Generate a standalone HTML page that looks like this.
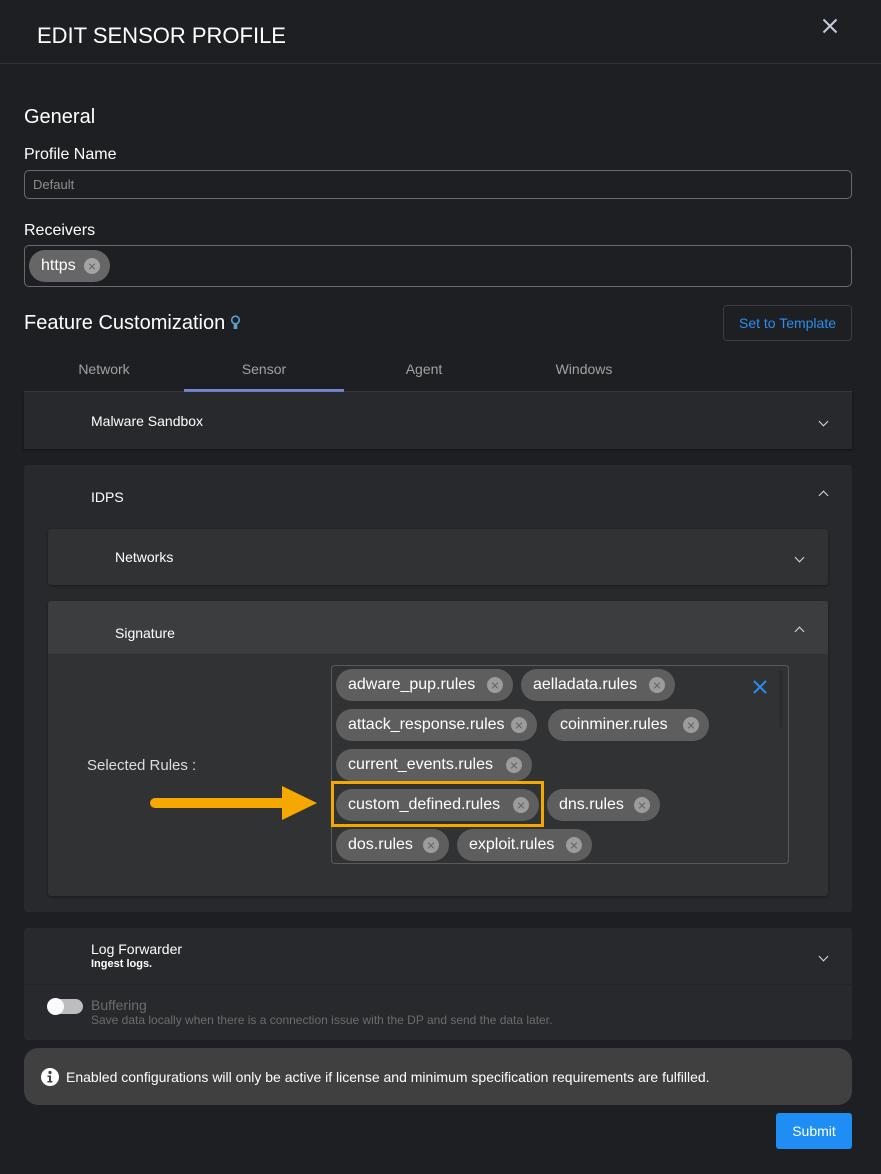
<!DOCTYPE html>
<html><head><meta charset="utf-8"><style>
*{box-sizing:border-box;margin:0;padding:0}
body{width:881px;height:1174px;background:#1e1f22;font-family:"Liberation Sans",sans-serif;color:#fff;position:relative;overflow:hidden}
.a{position:absolute}
.chip{position:absolute;height:32px;border-radius:16px;background:#5e5e5e;color:#fff;font-size:16px;line-height:32px;padding-left:12px;white-space:nowrap}
.chip i{position:absolute;right:10px;top:8px;width:16px;height:16px;border-radius:50%;background:#9c9c9c}
.chip i:before,.chip i:after{content:"";position:absolute;left:4px;top:7.5px;width:8px;height:1px;background:#5e5e5e;transform:rotate(45deg)}
.chip i:after{transform:rotate(-45deg)}
.chev{position:absolute;width:7px;height:7px;border-right:1.5px solid #ddd;border-bottom:1.5px solid #ddd;transform:rotate(45deg)}
.up{transform:rotate(-135deg)}
</style></head><body>
<div class="a" style="left:37px;top:23px;font-size:22px">EDIT SENSOR PROFILE</div>
<svg class="a" style="left:822px;top:18px" width="16" height="16"><path d="M1.5 1.5L14.5 14.5M14.5 1.5L1.5 14.5" stroke="#c4cedb" stroke-width="2"/></svg>
<div class="a" style="left:0;top:63px;width:881px;height:1px;background:#323336"></div>

<div class="a" style="left:24px;top:106px;font-size:20px">General</div>
<div class="a" style="left:24px;top:146px;font-size:16px">Profile Name</div>
<div class="a" style="left:24px;top:170px;width:828px;height:29px;border:1px solid #6a6a6a;border-radius:5px;font-size:13px;color:#8e8e8e;padding:6px 0 0 8px">Default</div>
<div class="a" style="left:24px;top:222px;font-size:16px">Receivers</div>
<div class="a" style="left:24px;top:245px;width:828px;height:42px;border:1px solid #6a6a6a;border-radius:5px"></div>
<div class="chip" style="left:29px;top:250px;width:81px;background:#666">https<i style="background:#a4a4a4"></i></div>

<div class="a" style="left:24px;top:312px;font-size:20px">Feature Customization</div>
<svg class="a" style="left:230px;top:315px" width="11" height="16"><circle cx="5.5" cy="5" r="3.8" fill="none" stroke="#5aa0d0" stroke-width="1.6"/><rect x="3.7" y="9" width="3.6" height="5" fill="#5aa0d0"/></svg>
<div class="a" style="left:723px;top:305px;width:129px;height:36px;border:1px solid #3c3d40;border-radius:4px;color:#2b8ef0;font-size:14px;text-align:center;line-height:34px">Set to Template</div>

<div class="a" style="left:24px;top:361px;width:160px;text-align:center;font-size:14px;color:#a2a2a2">Network</div>
<div class="a" style="left:184px;top:361px;width:160px;text-align:center;font-size:14px;color:#a2a2a2">Sensor</div>
<div class="a" style="left:344px;top:361px;width:160px;text-align:center;font-size:14px;color:#a2a2a2">Agent</div>
<div class="a" style="left:504px;top:361px;width:160px;text-align:center;font-size:14px;color:#a2a2a2">Windows</div>
<div class="a" style="left:24px;top:391px;width:828px;height:1px;background:#3a3b3e"></div>
<div class="a" style="left:184px;top:389px;width:160px;height:3px;background:#7a84d2"></div>

<div class="a" style="left:24px;top:392px;width:828px;height:57px;background:#28292c;box-shadow:0 1px 2px #111"></div>
<div class="a" style="left:91px;top:413px;font-size:14px">Malware Sandbox</div>
<div class="chev" style="left:820px;top:418px"></div>

<div class="a" style="left:24px;top:465px;width:828px;height:447px;background:#28292c;border-radius:3px"></div>
<div class="a" style="left:91px;top:489px;font-size:14px">IDPS</div>
<div class="chev up" style="left:820px;top:492px"></div>

<div class="a" style="left:48px;top:529px;width:780px;height:56px;background:#313234;border-radius:3px;box-shadow:0 1px 2px #1a1a1a"></div>
<div class="a" style="left:115px;top:549px;font-size:14px">Networks</div>
<div class="chev" style="left:796px;top:554px"></div>

<div class="a" style="left:48px;top:601px;width:780px;height:295px;background:#313234;border-radius:3px;box-shadow:0 1px 2px #1a1a1a"></div>
<div class="a" style="left:48px;top:601px;width:780px;height:53px;background:#3c3d3e;border-radius:3px 3px 0 0"></div>
<div class="a" style="left:115px;top:625px;font-size:14px">Signature</div>
<div class="chev up" style="left:796px;top:628px"></div>

<div class="a" style="left:87px;top:757px;font-size:15px;color:#ddd">Selected Rules :</div>
<div class="a" style="left:331px;top:665px;width:458px;height:199px;border:1px solid #5a5a5a;border-radius:4px"></div>
<div class="a" style="left:779px;top:670px;width:4px;height:58px;background:#2c2d2f;border-radius:2px"></div>
<svg class="a" style="left:752px;top:679px" width="16" height="16"><path d="M2 2L14 14M14 2L2 14" stroke="#2b8ef0" stroke-width="2"/></svg>

<div class="chip" style="left:336px;top:669px;width:177px">adware_pup.rules<i></i></div>
<div class="chip" style="left:521px;top:669px;width:154px">aelladata.rules<i></i></div>
<div class="chip" style="left:336px;top:709px;width:201px">attack_response.rules<i></i></div>
<div class="chip" style="left:548px;top:709px;width:161px">coinminer.rules<i></i></div>
<div class="chip" style="left:336px;top:749px;width:196px">current_events.rules<i></i></div>
<div class="chip" style="left:336px;top:789px;width:203px">custom_defined.rules<i></i></div>
<div class="chip" style="left:547px;top:789px;width:113px">dns.rules<i></i></div>
<div class="chip" style="left:336px;top:829px;width:113px">dos.rules<i></i></div>
<div class="chip" style="left:457px;top:829px;width:135px">exploit.rules<i></i></div>
<div class="a" style="left:331px;top:781px;width:213px;height:46px;border:3px solid #f5a800"></div>
<div class="a" style="left:150px;top:798px;width:140px;height:10px;background:#f5a800;border-radius:5px"></div>
<svg class="a" style="left:282px;top:786px" width="36" height="34"><path d="M0 0L35 17L0 34Z" fill="#f5a800"/></svg>

<div class="a" style="left:24px;top:928px;width:828px;height:112px;background:#28292c;border-radius:3px"></div>
<div class="a" style="left:24px;top:984px;width:828px;height:1px;background:#222326"></div>
<div class="a" style="left:91px;top:941px;font-size:14px">Log Forwarder</div>
<div class="a" style="left:91px;top:958px;font-size:11px;font-weight:bold">Ingest logs.</div>
<div class="chev" style="left:820px;top:953px"></div>
<div class="a" style="left:48px;top:999px;width:35px;height:15px;border-radius:8px;background:#bdbdbd"></div>
<div class="a" style="left:47px;top:998px;width:17px;height:17px;border-radius:50%;background:#fafafa"></div>
<div class="a" style="left:91px;top:997px;font-size:14px;color:#6c6c6c">Buffering</div>
<div class="a" style="left:91px;top:1013px;font-size:12px;color:#6c6c6c">Save data locally when there is a connection issue with the DP and send the data later.</div>

<div class="a" style="left:24px;top:1048px;width:828px;height:57px;background:#404040;border-radius:14px"></div>
<svg class="a" style="left:40px;top:1067px" width="20" height="20"><circle cx="10" cy="10" r="9" fill="#fff"/><circle cx="10" cy="5.5" r="1.6" fill="#404040"/><path d="M7.5 8.5H11V14H12.5V15.5H7.5V14H9V10H7.5Z" fill="#404040"/></svg>
<div class="a" style="left:66px;top:1069px;font-size:14px">Enabled configurations will only be active if license and minimum specification requirements are fulfilled.</div>

<div class="a" style="left:776px;top:1113px;width:76px;height:36px;background:#1e8ef5;border-radius:3px;font-size:14px;text-align:center;line-height:36px">Submit</div>
</body></html>
